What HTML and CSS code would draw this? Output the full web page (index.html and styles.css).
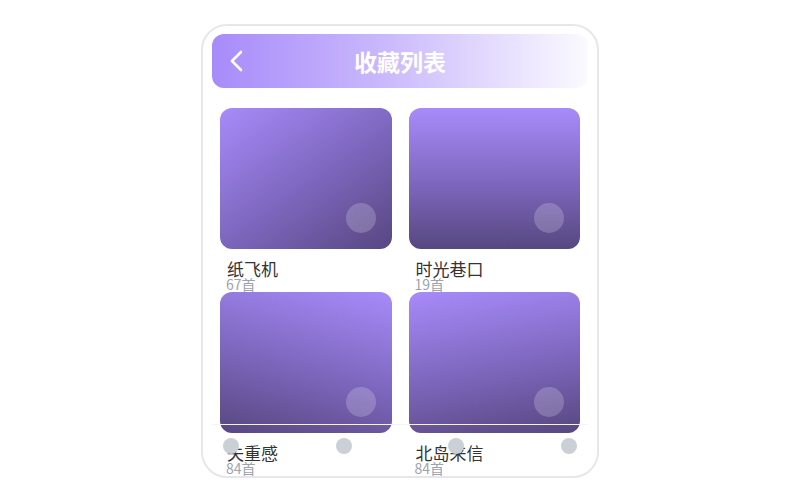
FILE: index.html
```html
<!DOCTYPE html>
<html>
<head>
    <meta charset="UTF-8">
    <title>收藏列表</title>
    <link rel="stylesheet" href="styles.css">
</head>
<body>

<div class="phone">
    <div class="header">
        <a href="javascript:;" class="back">
            <svg width="14" height="22" viewBox="0 0 14 22">
                <polyline points="11,2 2,11 11,20" fill="none" stroke="#fff" stroke-width="2.6" stroke-linecap="round" stroke-linejoin="round"/>
            </svg>
        </a>
        <h1 class="title">收藏列表</h1>
    </div>

    <div class="list">
        <div class="item">
            <div class="cover cover-a"><span class="play"></span></div>
            <div class="name">纸飞机</div>
            <div class="count">67首</div>
        </div>
        <div class="item">
            <div class="cover cover-b"><span class="play"></span></div>
            <div class="name">时光巷口</div>
            <div class="count">19首</div>
        </div>
        <div class="item">
            <div class="cover cover-c"><span class="play"></span></div>
            <div class="name">失重感</div>
            <div class="count">84首</div>
        </div>
        <div class="item">
            <div class="cover cover-d"><span class="play"></span></div>
            <div class="name">北岛来信</div>
            <div class="count">84首</div>
        </div>
    </div>

    <div class="nav">
        <span class="dot"></span>
        <span class="dot"></span>
        <span class="dot"></span>
        <span class="dot"></span>
    </div>
</div>

</body>
</html>
```

FILE: styles.css
```css
body,div,h1{margin:0;padding:0;}
body {
    background: #fff;
    font-family: "Noto Sans CJK SC", "Noto Sans", sans-serif;
}
.phone {
    margin: 24px auto 0 auto;
    padding: 8px 9px;
    box-sizing: border-box;
    width: 398px;
    height: 454px;
    border: 2px solid #e6e7eb;
    border-radius: 26px;
    overflow: hidden;
    position: relative;
}
.header {
    height: 54px;
    border-radius: 12px;
    background: linear-gradient(90deg, #a78bfa 0%, #c9b8fc 45%, #fbfaff 100%);
    display: flex;
    align-items: center;
    position: relative;
}
.back {
    display: flex;
    margin-left: 18px;
}
.title {
    position: absolute;
    left: 0;
    right: 0;
    text-align: center;
    font-size: 23px;
    font-weight: bold;
    color: #fff;
    line-height: 54px;
    pointer-events: none;
}
.list {
    display: grid;
    grid-template-columns: 1fr 1fr;
    grid-auto-rows: 167px;
    gap: 17px 17px;
    padding: 20px 8px 0 8px;
}
.cover {
    height: 141px;
    border-radius: 12px;
    position: relative;
}
.cover-a { background: linear-gradient(145deg, #a78bfa 0%, #7b65bb 55%, #574780 100%); }
.cover-b { background: linear-gradient(180deg, #a78bfa 0%, #7c66bc 55%, #574780 100%); }
.cover-c { background: linear-gradient(195deg, #a78bfa 0%, #7c66bc 55%, #574780 100%); }
.cover-d { background: linear-gradient(170deg, #a78bfa 0%, #7c66bc 55%, #574780 100%); }
.play {
    position: absolute;
    right: 16px;
    bottom: 16px;
    width: 30px;
    height: 30px;
    border-radius: 50%;
    background: rgba(255,255,255,0.2);
}
.name {
    margin-top: 11px;
    padding-left: 7px;
    font-size: 17px;
    line-height: 17px;
    color: #333;
}
.count {
    padding-left: 6px;
    font-size: 14px;
    line-height: 14px;
    color: #9ca3af;
}
.nav {
    position: absolute;
    left: 9px;
    right: 9px;
    bottom: 0;
    height: 52px;
    box-sizing: border-box;
    border-top: 1px solid #f3f4f6;
    padding: 13px 11px 0 11px;
    display: flex;
    justify-content: space-between;
    align-items: flex-start;
}
.dot {
    width: 16px;
    height: 16px;
    border-radius: 50%;
    background: #cbd0d6;
}
```
